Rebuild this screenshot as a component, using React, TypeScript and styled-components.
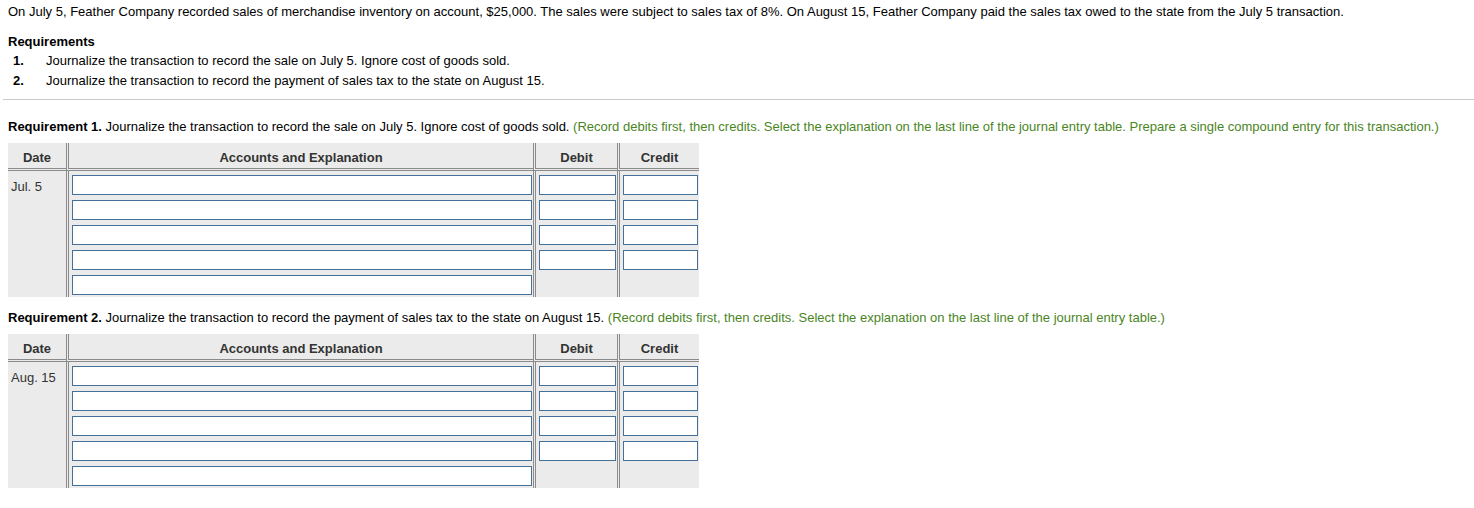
import React from "react";
import styled, { createGlobalStyle } from "styled-components";

const GlobalStyle = createGlobalStyle`
  html, body { margin: 0; padding: 0; background: #ffffff; }
  body {
    font-family: "Liberation Sans", Arial, Helvetica, sans-serif;
    font-size: 13px;
    color: #000;
  }
  * { box-sizing: border-box; }
`;

const Page = styled.div`
  width: 1474px;
  padding-top: 2px;
`;

const Section = styled.div`
  padding: 0 8px;
`;

const Para = styled.p`
  margin: 0;
  line-height: 20px;
  color: #000;
`;

const ReqTitle = styled.div`
  margin-top: 11px;
  line-height: 18px;
  font-weight: bold;
`;

const ReqList = styled.ol`
  list-style: none;
  margin: 0;
  padding: 0;
`;

const ReqItem = styled.li`
  display: flex;
  line-height: 20px;
`;

const ReqNum = styled.span`
  width: 38px;
  padding-left: 5px;
  font-weight: bold;
`;

const Divider = styled.hr`
  margin: 8px 0 0 3px;
  border: 0;
  height: 1px;
  background: #c9c9ce;
`;

const Prompt = styled.p<{ $top: number }>`
  margin: ${(p) => p.$top}px 0 6px 0;
  line-height: 20px;
  color: #000;
`;

const Strong = styled.b`
  font-weight: bold;
`;

const Hint = styled.span`
  color: #4a8524;
`;

const Table = styled.div`
  display: grid;
  grid-template-columns: 58px 467px 84px 82px;
  width: 691px;
  background: #ebebeb;
`;

const HeadCell = styled.div<{ $first?: boolean }>`
  height: 28px;
  padding-top: 5px;
  line-height: 20px;
  text-align: center;
  font-weight: bold;
  color: #333;
  border-bottom: 3px double #8a8a8a;
  border-left: ${(p) => (p.$first ? "none" : "3px double #8a8a8a")};
`;

const DateCell = styled.div`
  padding: 6px 0 0 3px;
  line-height: 20px;
  color: #333;
  text-align: left;
`;

const InputCol = styled.div`
  display: flex;
  flex-direction: column;
  gap: 5px;
  padding: 4px 0 2px 3px;
  border-left: 3px double #8a8a8a;
`;

const EntryInput = styled.input<{ $w: number }>`
  display: block;
  width: ${(p) => p.$w}px;
  height: 20px;
  margin: 0;
  padding: 0 3px;
  border: 1px solid #44709a;
  background: #fff;
  font-family: "Liberation Sans", Arial, sans-serif;
  font-size: 13px;
  outline: none;
`;

type JournalProps = { date: string };

const Journal: React.FC<JournalProps> = ({ date }) => (
  <Table>
    <HeadCell $first>Date</HeadCell>
    <HeadCell>Accounts and Explanation</HeadCell>
    <HeadCell>Debit</HeadCell>
    <HeadCell>Credit</HeadCell>
    <DateCell>{date}</DateCell>
    <InputCol>
      {[0, 1, 2, 3, 4].map((i) => (
        <EntryInput key={i} $w={460} aria-label={`account ${i + 1}`} />
      ))}
    </InputCol>
    <InputCol>
      {[0, 1, 2, 3].map((i) => (
        <EntryInput key={i} $w={77} aria-label={`debit ${i + 1}`} />
      ))}
    </InputCol>
    <InputCol>
      {[0, 1, 2, 3].map((i) => (
        <EntryInput key={i} $w={75} aria-label={`credit ${i + 1}`} />
      ))}
    </InputCol>
  </Table>
);

export default function App() {
  return (
    <>
      <GlobalStyle />
      <Page>
        <Section>
          <Para>
            On July 5, Feather Company recorded sales of merchandise inventory on account, $25,000. The sales were
            subject to sales tax of 8%. On August 15, Feather Company paid the sales tax owed to the state from the
            July 5 transaction.
          </Para>
          <ReqTitle>Requirements</ReqTitle>
          <ReqList>
            <ReqItem>
              <ReqNum>1.</ReqNum>
              <span>Journalize the transaction to record the sale on July 5. Ignore cost of goods sold.</span>
            </ReqItem>
            <ReqItem>
              <ReqNum>2.</ReqNum>
              <span>Journalize the transaction to record the payment of sales tax to the state on August 15.</span>
            </ReqItem>
          </ReqList>
        </Section>
        <Divider />
        <Section>
          <Prompt $top={17}>
            <Strong>Requirement 1.</Strong> Journalize the transaction to record the sale on July 5. Ignore cost of
            goods sold.{" "}
            <Hint>
              (Record debits first, then credits. Select the explanation on the last line of the journal entry table.
              Prepare a single compound entry for this transaction.)
            </Hint>
          </Prompt>
          <Journal date="Jul. 5" />
          <Prompt $top={11}>
            <Strong>Requirement 2.</Strong> Journalize the transaction to record the payment of sales tax to the state
            on August 15.{" "}
            <Hint>
              (Record debits first, then credits. Select the explanation on the last line of the journal entry table.)
            </Hint>
          </Prompt>
          <Journal date="Aug. 15" />
        </Section>
      </Page>
    </>
  );
}
